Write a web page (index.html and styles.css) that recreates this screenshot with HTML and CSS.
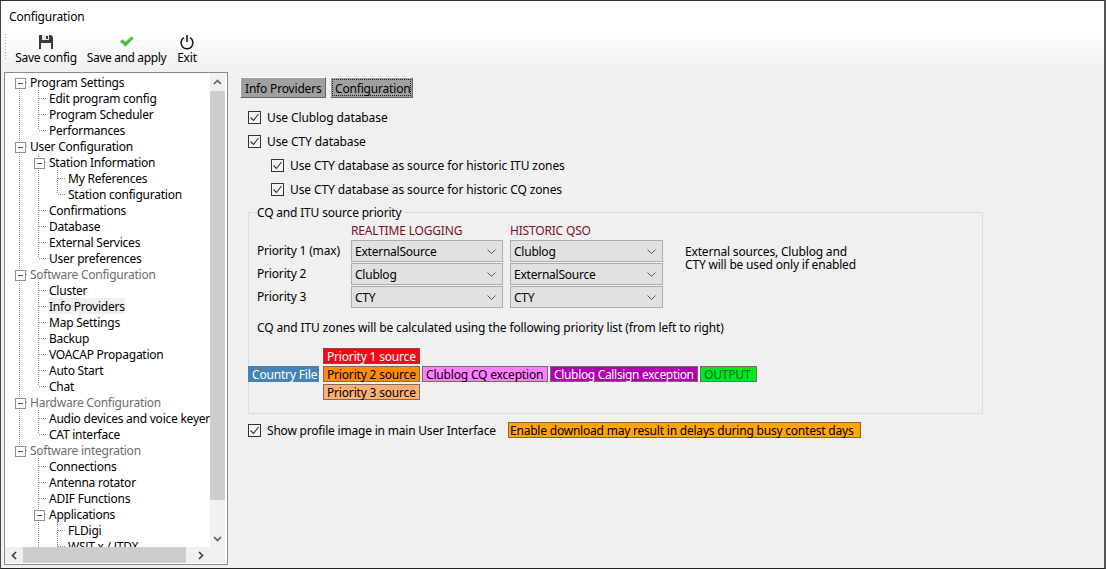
FILE: index.html
```html
<!DOCTYPE html>
<html lang="en">
<head>
<meta charset="utf-8">
<title>Configuration</title>
<link rel="stylesheet" href="styles.css">
</head>
<body>
<div class="window">
  <div class="titlebar">Configuration</div>
  <div class="toolbar">
    <div class="grip"></div>
    <div class="tool tool-save">
      <svg class="ticon" width="16" height="16" viewBox="0 0 16 16"><path d="M1 1h12l2 2v12H1z" fill="#3a3a3a"/><rect x="4" y="1" width="7" height="5" fill="#e8e8e8"/><rect x="8" y="2" width="2" height="3" fill="#3a3a3a"/><rect x="3" y="9" width="10" height="6" fill="#f4f4f4"/></svg>
      <span>Save config</span>
    </div>
    <div class="tool tool-apply">
      <svg class="ticon" width="16" height="16" viewBox="0 0 16 16"><path d="M1 7.500l2.500-2 3 2.500 6-5.500 2 2-8 8z" fill="#4fb848" stroke="#7fdc70" stroke-width=".6"/></svg>
      <span>Save and apply</span>
    </div>
    <div class="tool tool-exit">
      <svg class="ticon" width="16" height="16" viewBox="0 0 16 16"><path d="M5 3.600A6 6 0 1 0 11 3.600" fill="none" stroke="#111" stroke-width="1.500"/><path d="M8 1v7" stroke="#111" stroke-width="1.500"/></svg>
      <span>Exit</span>
    </div>
  </div>
  <div class="content">
    <aside class="treeframe">
      <nav class="tree">
        <div class="row"><i class="c m first"></i><span>Program Settings</span></div>
        <div class="row"><i class="c v"></i><i class="c t"></i><span>Edit program config</span></div>
        <div class="row"><i class="c v"></i><i class="c t"></i><span>Program Scheduler</span></div>
        <div class="row"><i class="c v"></i><i class="c l"></i><span>Performances</span></div>
        <div class="row"><i class="c m"></i><span>User Configuration</span></div>
        <div class="row"><i class="c v"></i><i class="c m"></i><span>Station Information</span></div>
        <div class="row"><i class="c v"></i><i class="c v"></i><i class="c t"></i><span>My References</span></div>
        <div class="row"><i class="c v"></i><i class="c v"></i><i class="c l"></i><span>Station configuration</span></div>
        <div class="row"><i class="c v"></i><i class="c t"></i><span>Confirmations</span></div>
        <div class="row"><i class="c v"></i><i class="c t"></i><span>Database</span></div>
        <div class="row"><i class="c v"></i><i class="c t"></i><span>External Services</span></div>
        <div class="row"><i class="c v"></i><i class="c l"></i><span>User preferences</span></div>
        <div class="row muted"><i class="c m"></i><span>Software Configuration</span></div>
        <div class="row"><i class="c v"></i><i class="c t"></i><span>Cluster</span></div>
        <div class="row selected"><i class="c v"></i><i class="c t"></i><span>Info Providers</span></div>
        <div class="row"><i class="c v"></i><i class="c t"></i><span>Map Settings</span></div>
        <div class="row"><i class="c v"></i><i class="c t"></i><span>Backup</span></div>
        <div class="row"><i class="c v"></i><i class="c t"></i><span>VOACAP Propagation</span></div>
        <div class="row"><i class="c v"></i><i class="c t"></i><span>Auto Start</span></div>
        <div class="row"><i class="c v"></i><i class="c l"></i><span>Chat</span></div>
        <div class="row muted"><i class="c m"></i><span>Hardware Configuration</span></div>
        <div class="row"><i class="c v"></i><i class="c t"></i><span>Audio devices and voice keyer</span></div>
        <div class="row"><i class="c v"></i><i class="c l"></i><span>CAT interface</span></div>
        <div class="row muted"><i class="c m last"></i><span>Software integration</span></div>
        <div class="row"><i class="c"></i><i class="c t"></i><span>Connections</span></div>
        <div class="row"><i class="c"></i><i class="c t"></i><span>Antenna rotator</span></div>
        <div class="row"><i class="c"></i><i class="c t"></i><span>ADIF Functions</span></div>
        <div class="row"><i class="c"></i><i class="c m"></i><span>Applications</span></div>
        <div class="row"><i class="c"></i><i class="c v"></i><i class="c t"></i><span>FLDigi</span></div>
        <div class="row"><i class="c"></i><i class="c v"></i><i class="c t"></i><span>WSJT x / JTDX</span></div>
      </nav>
      <div class="vbar">
        <div class="arrow"><svg width="9" height="6" viewBox="0 0 9 6"><path d="M1 5l3.500-3.500L8 5" fill="none" stroke="#606060" stroke-width="1.700"/></svg></div>
        <div class="vthumb"></div>
        <div class="arrow arrow-down"><svg width="9" height="6" viewBox="0 0 9 6"><path d="M1 1l3.500 3.500L8 1" fill="none" stroke="#606060" stroke-width="1.700"/></svg></div>
      </div>
      <div class="hbar">
        <div class="harrow"><svg width="6" height="9" viewBox="0 0 6 9"><path d="M5 1L1.500 4.500 5 8" fill="none" stroke="#404040" stroke-width="1.700"/></svg></div>
        <div class="hthumb"></div>
        <div class="harrow harrow-right"><svg width="6" height="9" viewBox="0 0 6 9"><path d="M1 1l3.500 3.500L1 8" fill="none" stroke="#404040" stroke-width="1.700"/></svg></div>
      </div>
      <div class="corner"></div>
    </aside>
    <main class="main">
      <div class="tabs">
        <div class="tab tab-info">Info Providers</div>
        <div class="tab tab-active"><span class="focus">Configuration</span></div>
      </div>
      <label class="check"><span class="box"><svg width="11" height="11" viewBox="0 0 11 11"><path d="M1.500 5.500l3 3 5-6.500" fill="none" stroke="#333" stroke-width="1.100"/></svg></span>Use Clublog database</label>
      <label class="check"><span class="box"><svg width="11" height="11" viewBox="0 0 11 11"><path d="M1.500 5.500l3 3 5-6.500" fill="none" stroke="#333" stroke-width="1.100"/></svg></span>Use CTY database</label>
      <label class="check sub"><span class="box"><svg width="11" height="11" viewBox="0 0 11 11"><path d="M1.500 5.500l3 3 5-6.500" fill="none" stroke="#333" stroke-width="1.100"/></svg></span>Use CTY database as source for historic ITU zones</label>
      <label class="check sub"><span class="box"><svg width="11" height="11" viewBox="0 0 11 11"><path d="M1.500 5.500l3 3 5-6.500" fill="none" stroke="#333" stroke-width="1.100"/></svg></span>Use CTY database as source for historic CQ zones</label>
      <fieldset class="group">
        <legend>CQ and ITU source priority</legend>
        <div class="grid">
          <div class="head head-a">REALTIME LOGGING</div>
          <div class="head head-b">HISTORIC QSO</div>
          <div class="plabel">Priority 1 (max)</div>
          <div class="combo">ExternalSource<svg width="9" height="5" viewBox="0 0 9 5"><path d="M.5.500l4 4 4-4" fill="none" stroke="#555"/></svg></div>
          <div class="combo combo-b">Clublog<svg width="9" height="5" viewBox="0 0 9 5"><path d="M.5.500l4 4 4-4" fill="none" stroke="#555"/></svg></div>
          <div class="note">External sources, Clublog and<br>CTY will be used only if enabled</div>
          <div class="plabel">Priority 2</div>
          <div class="combo">Clublog<svg width="9" height="5" viewBox="0 0 9 5"><path d="M.5.500l4 4 4-4" fill="none" stroke="#555"/></svg></div>
          <div class="combo combo-b">ExternalSource<svg width="9" height="5" viewBox="0 0 9 5"><path d="M.5.500l4 4 4-4" fill="none" stroke="#555"/></svg></div>
          <div class="plabel">Priority 3</div>
          <div class="combo">CTY<svg width="9" height="5" viewBox="0 0 9 5"><path d="M.5.500l4 4 4-4" fill="none" stroke="#555"/></svg></div>
          <div class="combo combo-b">CTY<svg width="9" height="5" viewBox="0 0 9 5"><path d="M.5.500l4 4 4-4" fill="none" stroke="#555"/></svg></div>
        </div>
        <p class="sentence">CQ and ITU zones will be calculated using the following priority list (from left to right)</p>
        <div class="chain">
          <div class="tag t-country">Country File</div>
          <div class="stack">
            <div class="tag t-p1">Priority 1 source</div>
            <div class="tag t-p2">Priority 2 source</div>
            <div class="tag t-p3">Priority 3 source</div>
          </div>
          <div class="tag t-cq">Clublog CQ exception</div>
          <div class="tag t-call">Clublog Callsign exception</div>
          <div class="tag t-out">OUTPUT</div>
        </div>
      </fieldset>
      <div class="bottomrow">
        <label class="check profile"><span class="box"><svg width="11" height="11" viewBox="0 0 11 11"><path d="M1.500 5.500l3 3 5-6.500" fill="none" stroke="#333" stroke-width="1.100"/></svg></span>Show profile image in main User Interface</label>
        <div class="warning">Enable download may result in delays during busy contest days</div>
      </div>
    </main>
  </div>
</div>
</body>
</html>
```

FILE: styles.css
```css
* { box-sizing: border-box; }
html, body { margin: 0; padding: 0; height: 100%; overflow: hidden; }
body { font-family: "Noto Sans", "Open Sans", sans-serif; font-size: 12px; letter-spacing: -0.18px; color: #000; background: #f0f0f0; }
.window { width: 1106px; height: 569px; display: flex; flex-direction: column; border-top: 1px solid #333; border-left: 1px solid #444; border-right: 2px solid #555; border-bottom: 1px solid #222; background: #f0f0f0; }
.titlebar { height: 30px; padding: 8px 0 0 8px; background: #fff; line-height: 15px; }
.toolbar { height: 40px; display: flex; background: linear-gradient(#fff, #f0f0f0); padding-left: 4px; }
.grip { width: 1px; height: 26px; margin-top: 3px; background: repeating-linear-gradient(#a8a8a8 0 1px, transparent 1px 3px); }
.tool { display: flex; flex-direction: column; align-items: center; padding-top: 3px; white-space: nowrap; }
.tool span { line-height: 16px; }
.ticon { display: block; }
.tool-save { width: 62px; margin-left: 9px; letter-spacing: -0.25px; }
.tool-apply { width: 79px; margin-left: 10px; letter-spacing: -0.38px; }
.tool-exit { width: 22px; margin-left: 10px; }
.content { flex: 1; min-height: 0; display: flex; }
.treeframe { width: 224px; height: 493px; margin: 1px 0 0 3px; border: 1px solid #8a8a8a; padding-right: 1px; display: grid; grid-template-columns: 205px 15px; grid-template-rows: 474px 16px; background: #fff; }
.tree { overflow: hidden; padding-top: 1px; white-space: nowrap; letter-spacing: -0.24px; }
.row { display: flex; height: 16px; line-height: 18px; padding-left: 5px; }
.row span { padding-left: 1px; }
.row.muted span { color: #6d6d6d; }
.row.selected span { background: #f0f0f0; }
.c { position: relative; width: 19px; height: 16px; flex: none; }
.v, .t, .m { background: repeating-linear-gradient(#8c8c8c 0 1px, transparent 1px 2px) 9px 0 / 1px 16px no-repeat; }
.t::after, .l::after, .m::before { content: ""; position: absolute; top: 8px; left: 10px; width: 8px; height: 1px; background: repeating-linear-gradient(90deg, #8c8c8c 0 1px, transparent 1px 2px); }
.l { background: repeating-linear-gradient(#8c8c8c 0 1px, transparent 1px 2px) 9px 0 / 1px 8px no-repeat; }
.m.first { background-position: 9px 8px; background-size: 1px 8px; }
.m.last { background-size: 1px 8px; }
.m::after { content: ""; position: absolute; top: 4px; left: 5px; width: 9px; height: 9px; border: 1px solid #909090; background: linear-gradient(#505050, #505050) center / 5px 1px no-repeat, #fff; }
.vbar { grid-column: 2; grid-row: 1; display: flex; flex-direction: column; background: #f0f0f0; }
.arrow { height: 18px; display: flex; align-items: center; justify-content: center; flex: none; }
.arrow-down { margin-top: auto; height: 17px; }
.vthumb { height: 409px; background: #cdcdcd; }
.hbar { grid-column: 1; grid-row: 2; display: flex; background: #f0f0f0; }
.harrow { width: 18px; display: flex; align-items: center; justify-content: center; flex: none; }
.harrow-right { margin-left: auto; }
.hthumb { width: 163px; background: #cdcdcd; }
.corner { grid-column: 2; grid-row: 2; background: #f0f0f0; }
.main { flex: 1; padding: 6px 0 0 12px; min-width: 0; }
.tabs { display: flex; gap: 4px; height: 21px; }
.tab { height: 21px; line-height: 21px; background: #a0a0a0; border: 1px solid; border-color: #fff #666 #666 #fff; }
.tab-info { width: 86px; padding-left: 4px; }
.tab-active { width: 83px; padding: 1px; }
.focus { display: block; height: 17px; line-height: 17px; border: 1px dotted #222; padding-left: 2px; }
.check { display: flex; align-items: center; height: 24px; margin-left: 8px; letter-spacing: -0.1px; }
.tabs + .check { margin-top: 7px; }
.check.sub { margin-left: 31px; }
.box { width: 13px; height: 13px; border: 1px solid #333; background: #f4f4f4; margin-right: 6px; flex: none; display: flex; }
.group { margin: 3px 0 0 8px; width: 735px; height: 210px; border: 1px solid #dcdcdc; padding: 2px 0 0 8px; min-width: 0; }
.group legend { padding: 0 3px 0 0; margin: 0; height: 16px; line-height: 18px; }
.grid { display: grid; grid-template-columns: 94px 152px 160px 1fr; grid-template-rows: 17px 22px 22px 22px; row-gap: 1px; }
.head { line-height: 17px; color: #7f0f1f; }
.head-a { grid-column: 2; }
.head-b { grid-column: 3; padding-left: 7px; }
.plabel { grid-column: 1; line-height: 22px; }
.combo { display: flex; align-items: center; justify-content: space-between; height: 22px; border: 1px solid #adadad; background: #e1e1e1; padding: 0 6px 0 3px; letter-spacing: -0.24px; }
.combo-b { margin-left: 7px; }
.note { grid-column: 4; grid-row: 2 / span 2; line-height: 13px; padding: 5px 0 0 22px; }
.sentence { margin: 12px 0 0; height: 16px; line-height: 16px; letter-spacing: -0.125px; }
.chain { display: flex; align-items: center; margin: 12px 0 0 -9px; gap: 2px; }
.stack { display: flex; flex-direction: column; gap: 2px; margin-left: 2px; }
.tag { height: 16px; line-height: 15px; padding-left: 3px; border: 1px solid #7a6a6a; white-space: nowrap; }
.t-country { width: 71px; background: #4682b4; border-color: #4682b4; color: #fff; }
.t-p1 { width: 97px; background: #ee0a14; border-color: #a83a3a; color: #fff; }
.t-p2 { width: 97px; background: #ff8c00; }
.t-p3 { width: 97px; background: #ffb074; }
.t-cq { width: 126px; background: #ff80ff; }
.t-call { width: 148px; background: #b000b0; color: #fff; letter-spacing: -0.33px; }
.t-out { width: 57px; background: #00e81e; color: #063; }
.bottomrow { display: flex; align-items: center; height: 16px; margin: 8px 0 0 8px; }
.check.profile { margin-left: 0; height: 16px; width: 260px; letter-spacing: -0.2px; }
.warning { width: 353px; height: 16px; line-height: 15px; padding-left: 1px; background: #ffa500; border: 1px solid #7a6a3a; letter-spacing: -0.21px; }
```
